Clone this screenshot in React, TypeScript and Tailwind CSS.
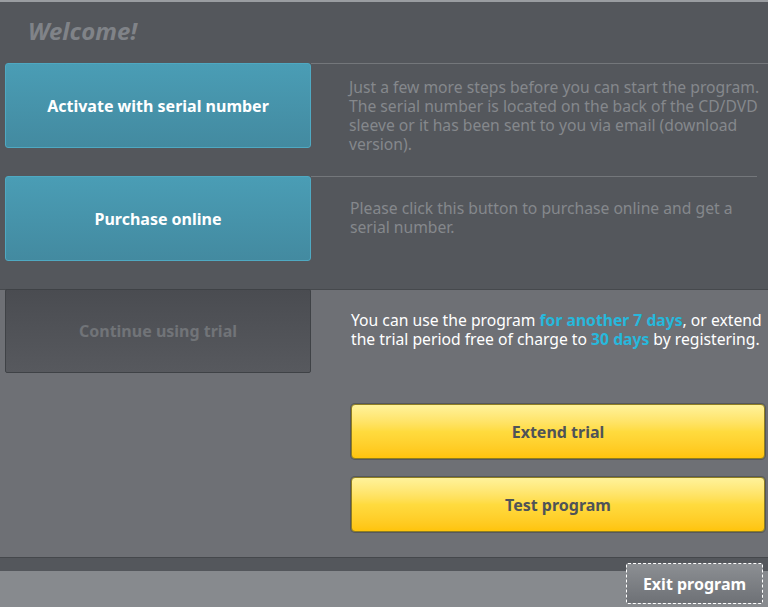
import React from "react";

const font = { fontFamily: '"Noto Sans", "Open Sans", sans-serif' };

function BlueButton({ label }: { label: string }) {
    return (
        <button className="ml-[5px] w-[306px] h-[85px] shrink-0 rounded-[3px] border border-[#4fa9c2] bg-gradient-to-b from-[#4a9db5] to-[#438aa0] text-white font-bold text-[16px]">
            {label}
        </button>
    );
}

function YellowButton({ label }: { label: string }) {
    return (
        <button className="w-[414px] h-[55px] rounded-[4px] border border-[#8f7e22] ring-1 ring-[#55585c] bg-gradient-to-b from-[#fff29a] via-[#ffdb3e] to-[#ffc40a] text-[#4f5358] font-bold text-[16px]">
            {label}
        </button>
    );
}

export default function App() {
    return (
        <div style={font} className="w-[768px] h-[607px] overflow-hidden flex flex-col bg-[#54575c] border-t-2 border-[#9a9da1]">
            {/* header */}
            <div className="h-[61px] pl-[28px] pt-[13px]">
                <h1 className="text-[24px] font-bold italic text-[#808388] leading-[32px]">Welcome!</h1>
            </div>

            {/* activate */}
            <div className="flex h-[113px]">
                <BlueButton label="Activate with serial number" />
                <div className="flex-1 border-t border-[#74777b] mr-[11px]">
                    <p className="w-[420px] pl-[38px] pt-[14px] text-[15.7px] leading-[19px] text-[#85888c] box-content">
                        Just a few more steps before you can start the program. The serial number is located on the back of the CD/DVD sleeve or it has been sent to you via email (download version).
                    </p>
                </div>
            </div>

            {/* purchase */}
            <div className="flex h-[113px]">
                <BlueButton label="Purchase online" />
                <div className="flex-1 border-t border-[#74777b] mr-[11px]">
                    <p className="w-[400px] pl-[39px] pt-[22px] text-[15.7px] leading-[19px] text-[#85888c] box-content">
                        Please click this button to purchase online and get a serial number.
                    </p>
                </div>
            </div>

            {/* trial */}
            <div className="h-[268px] bg-[#6e7075] border-t border-[#46494d] flex">
                <div className="pl-[5px]">
                    <button className="w-[306px] h-[84px] -mt-px rounded-[2px] border border-[#3f4246] bg-gradient-to-b from-[#4a4c51] to-[#57595e] text-[#717478] font-bold text-[16px]">
                        Continue using trial
                    </button>
                </div>
                <div className="flex-1 flex flex-col pl-[40px] pr-[4px]">
                    <p className="w-[416px] pt-[21px] text-[15.7px] leading-[19px] text-white">
                        You can use the program <b className="text-[#27b8dc]">for another 7 days</b>, or extend the trial period free of charge to <b className="text-[#27b8dc]">30 days</b> by registering.
                    </p>
                    <div className="mt-[55px] flex flex-col gap-[18px]">
                        <YellowButton label="Extend trial" />
                        <YellowButton label="Test program" />
                    </div>
                </div>
            </div>

            {/* bottom strip */}
            <div className="h-[14px] bg-[#54575c] border-t border-[#45484c]" />
            <div className="flex-1 bg-[#878a8e] flex justify-end pr-[5px]">
                <button className="-mt-[8px] w-[137px] h-[41px] rounded-[2px] border border-dashed border-white bg-gradient-to-b from-[#8c8f93] to-[#6e7176] text-white font-bold text-[16px]">
                    Exit program
                </button>
            </div>
        </div>
    );
}
